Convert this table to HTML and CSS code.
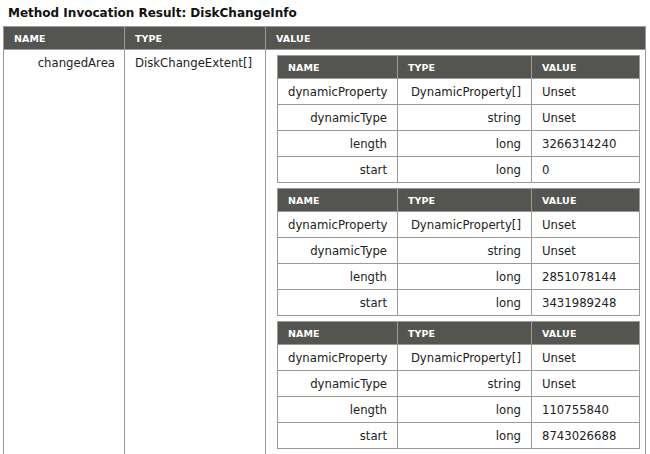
FILE: index.html
```html
<!DOCTYPE html>
<html>
<head>
<meta charset="utf-8">
<link rel="stylesheet" href="styles.css">
</head>
<body>
<div class="page">
  <div class="title">Method Invocation Result: DiskChangeInfo</div>
  <table class="grid outer">
    <colgroup><col class="oc1"><col class="oc2"><col class="oc3"></colgroup>
    <thead>
      <tr><th>Name</th><th>Type</th><th>Value</th></tr>
    </thead>
    <tbody>
      <tr>
        <td class="name">changedArea</td>
        <td class="type-l">DiskChangeExtent[]</td>
        <td class="nest">
          <table class="grid inner">
            <colgroup><col class="ic1"><col class="ic2"><col class="ic3"></colgroup>
            <thead><tr><th>Name</th><th>Type</th><th>Value</th></tr></thead>
            <tbody>
              <tr><td class="name">dynamicProperty</td><td class="type-r">DynamicProperty[]</td><td>Unset</td></tr>
              <tr><td class="name">dynamicType</td><td class="type-r">string</td><td>Unset</td></tr>
              <tr><td class="name">length</td><td class="type-r">long</td><td>3266314240</td></tr>
              <tr><td class="name">start</td><td class="type-r">long</td><td>0</td></tr>
            </tbody>
          </table>
          <table class="grid inner">
            <colgroup><col class="ic1"><col class="ic2"><col class="ic3"></colgroup>
            <thead><tr><th>Name</th><th>Type</th><th>Value</th></tr></thead>
            <tbody>
              <tr><td class="name">dynamicProperty</td><td class="type-r">DynamicProperty[]</td><td>Unset</td></tr>
              <tr><td class="name">dynamicType</td><td class="type-r">string</td><td>Unset</td></tr>
              <tr><td class="name">length</td><td class="type-r">long</td><td>2851078144</td></tr>
              <tr><td class="name">start</td><td class="type-r">long</td><td>3431989248</td></tr>
            </tbody>
          </table>
          <table class="grid inner">
            <colgroup><col class="ic1"><col class="ic2"><col class="ic3"></colgroup>
            <thead><tr><th>Name</th><th>Type</th><th>Value</th></tr></thead>
            <tbody>
              <tr><td class="name">dynamicProperty</td><td class="type-r">DynamicProperty[]</td><td>Unset</td></tr>
              <tr><td class="name">dynamicType</td><td class="type-r">string</td><td>Unset</td></tr>
              <tr><td class="name">length</td><td class="type-r">long</td><td>110755840</td></tr>
              <tr><td class="name">start</td><td class="type-r">long</td><td>8743026688</td></tr>
            </tbody>
          </table>
        </td>
      </tr>
    </tbody>
  </table>
</div>
</body>
</html>
```

FILE: styles.css
```css
html, body {
  margin: 0;
  padding: 0;
  background: #ffffff;
  overflow: hidden;
}
body {
  font-family: "DejaVu Sans", Verdana, sans-serif;
  font-size: 11.7px;
  color: #222222;
}
.page {
  padding: 0 5px 0 3px;
}
.title {
  font-weight: bold;
  font-size: 12px;
  line-height: 14px;
  padding: 6px 0 0 5px;
  height: 20px;
  color: #111111;
}
.grid {
  border-collapse: collapse;
  table-layout: fixed;
}
.grid th {
  background: #545450;
  color: #ffffff;
  font-size: 9.5px;
  font-weight: bold;
  text-transform: uppercase;
  text-align: left;
  padding: 0 10px;
  height: 22px;
  border: 1px solid #9a9a9a;
  letter-spacing: 0.1px;
}
.grid td {
  border: 1px solid #9a9a9a;
  padding: 0 10px;
  height: 25px;
  vertical-align: middle;
  white-space: nowrap;
}
.outer {
  width: 642px;
}
.outer .oc1 { width: 121px; }
.outer .oc2 { width: 141px; }
.outer .oc3 { width: 380px; }
.outer > tbody > tr > td {
  vertical-align: top;
  padding-top: 6px;
  height: auto;
}
.outer > tbody > tr > td.nest {
  padding: 5px 5px 0 11px;
}
.inner {
  width: 362px;
  margin-bottom: 5px;
}
.inner .ic1 { width: 120px; }
.inner .ic2 { width: 134px; }
.inner .ic3 { width: 108px; }
.name { text-align: right; }
.type-l { text-align: left; }
.type-r { text-align: right; }
.outer > tbody > tr > td.name { padding-right: 9px; }
```
